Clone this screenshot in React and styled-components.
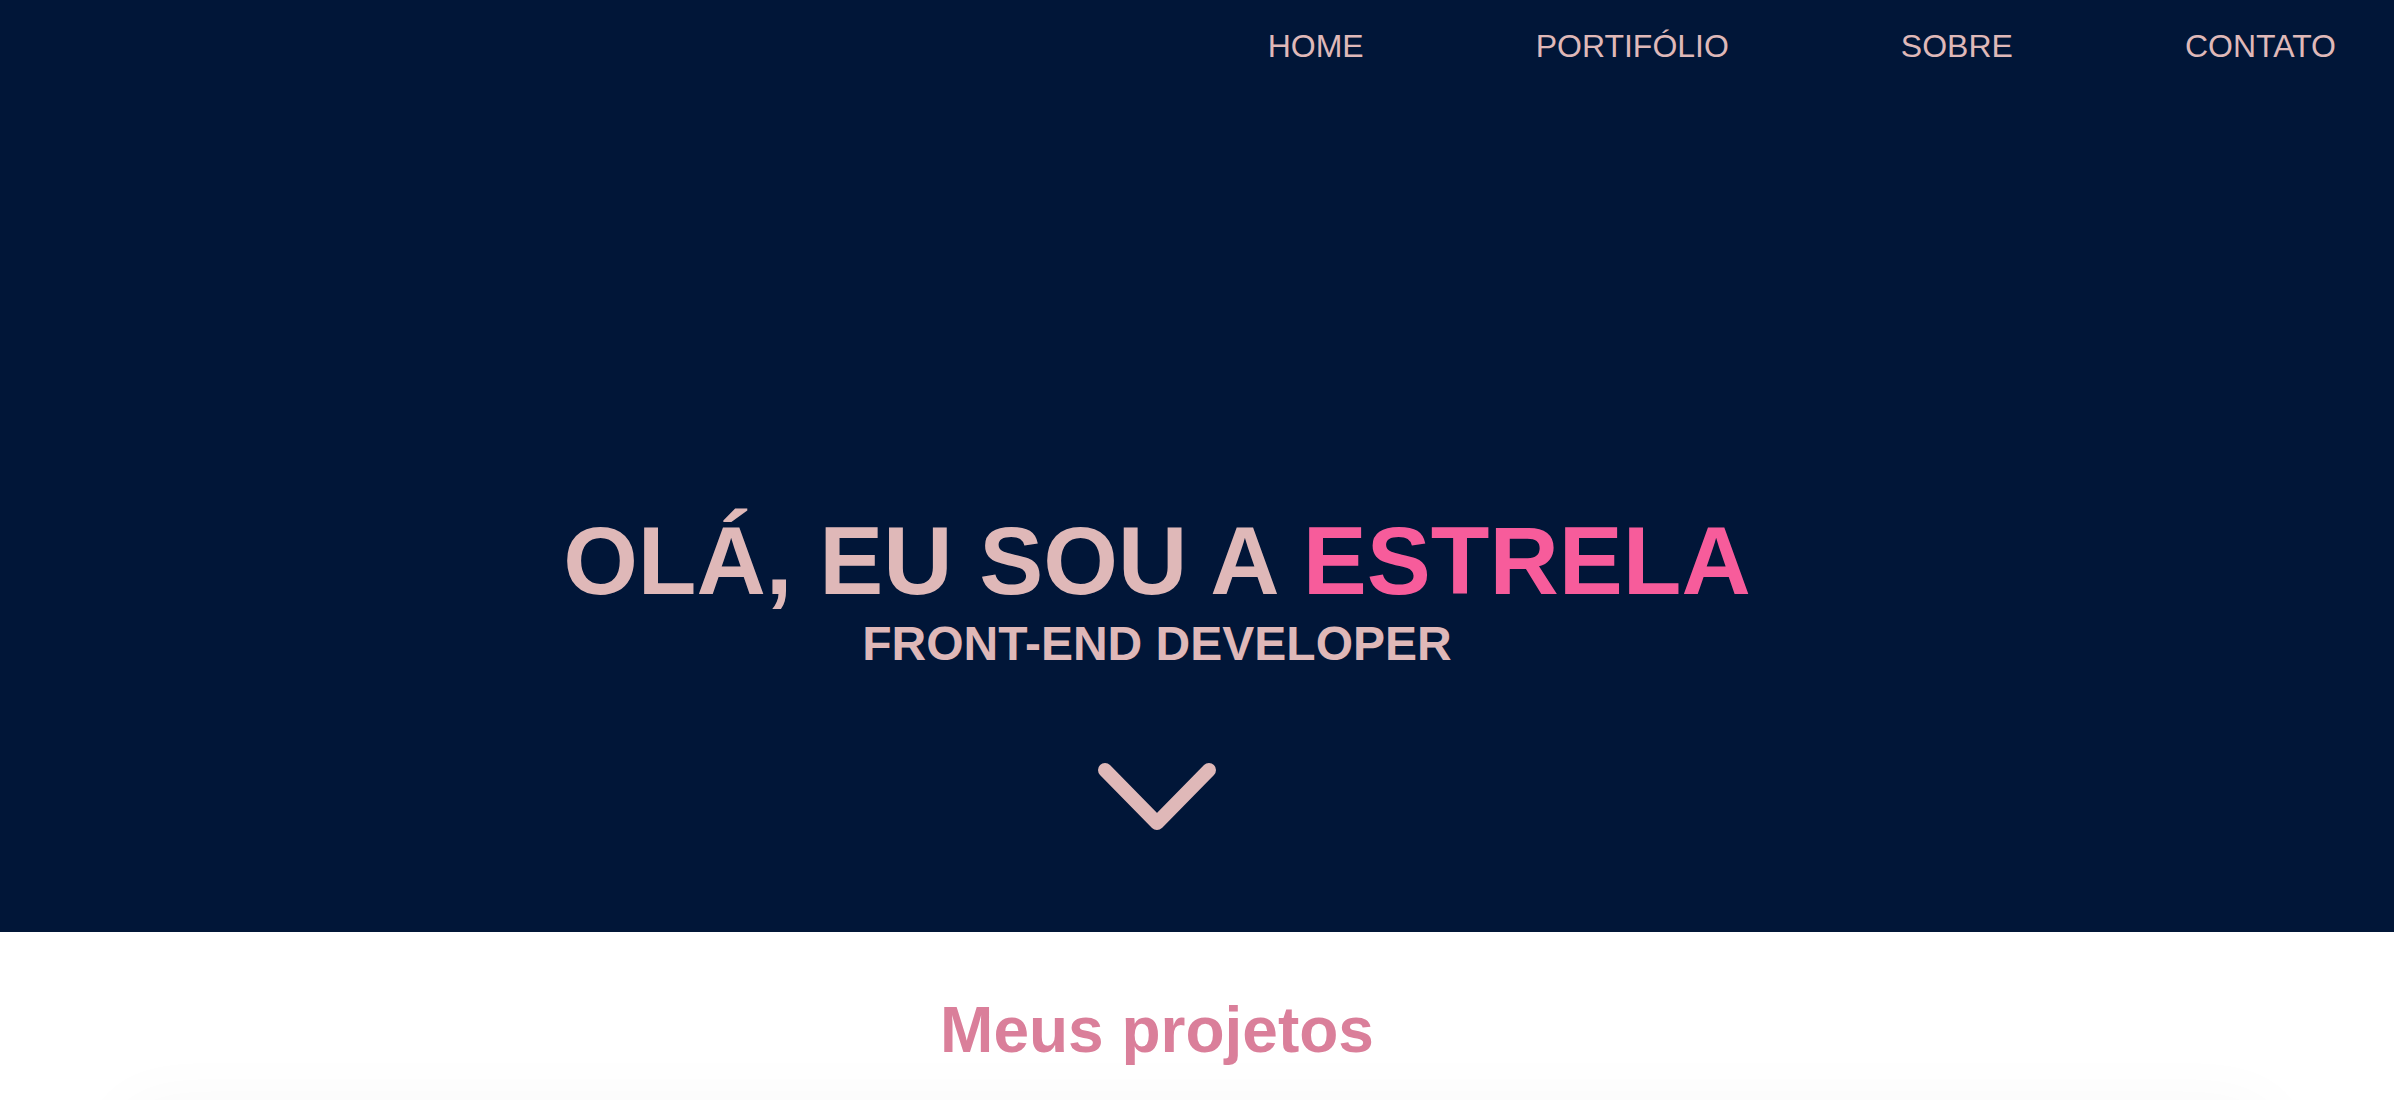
import React from 'react';
import styled, { createGlobalStyle } from 'styled-components';

const GlobalStyle = createGlobalStyle`
  * {
    box-sizing: border-box;
  }

  body {
    margin: 0;
    background: #ffffff;
    font-family: "Liberation Sans", Arial, Helvetica, sans-serif;
  }
`

const Hero = styled.header`
  display: flex;
  flex-direction: column;
  height: 932px;
  background: #011638;
  color: #dfb8b8;
`

const Nav = styled.nav`
  display: flex;
  justify-content: flex-end;
  gap: 172px;
  padding: 28px 58px 0 0;
`

const NavLink = styled.a`
  font-size: 32px;
  color: #dfb8b8;
  text-decoration: none;
  cursor: pointer;
`

const Intro = styled.div`
  display: flex;
  flex-direction: column;
  align-items: center;
  margin-top: 441px;
  padding-right: 80px;
`

const Title = styled.h1`
  margin: 0;
  font-size: 96px;
  font-weight: 700;
  line-height: normal;
  white-space: nowrap;

  span {
    color: #f75c9b;
  }
`

const Subtitle = styled.h2`
  margin: 0;
  font-size: 48px;
  font-weight: 700;
  line-height: normal;
`

const ScrollDown = styled.svg`
  display: block;
  margin-top: 91px;
  cursor: pointer;
`

const Projects = styled.section`
  display: flex;
  flex-direction: column;
  align-items: center;
  padding: 61px 80px 80px 0;
`

const SectionTitle = styled.h2`
  margin: 0;
  font-size: 64px;
  font-weight: 700;
  line-height: normal;
  color: #da7f9a;
`

const CardArea = styled.div`
  align-self: stretch;
  height: 420px;
  margin: 40px 40px 0 120px;
  border-radius: 32px;
  background: #ffffff;
  box-shadow: 0 -4px 70px rgba(0, 0, 0, 0.03);
`

const App = () => (
  <>
    <GlobalStyle/>
    <Hero>
      <Nav>
        <NavLink>HOME</NavLink>
        <NavLink>PORTIFÓLIO</NavLink>
        <NavLink>SOBRE</NavLink>
        <NavLink>CONTATO</NavLink>
      </Nav>
      <Intro>
        <Title>OLÁ, EU SOU A <span>ESTRELA</span></Title>
        <Subtitle>FRONT-END DEVELOPER</Subtitle>
        <ScrollDown width="120" height="70" viewBox="0 0 120 70" fill="none">
          <path
            d="M8 8 L60 61 L112 8"
            stroke="#dfb8b8"
            strokeWidth="14"
            strokeLinecap="round"
            strokeLinejoin="round"
          />
        </ScrollDown>
      </Intro>
    </Hero>
    <Projects>
      <SectionTitle>Meus projetos</SectionTitle>
      <CardArea/>
    </Projects>
  </>
);

export default App;
